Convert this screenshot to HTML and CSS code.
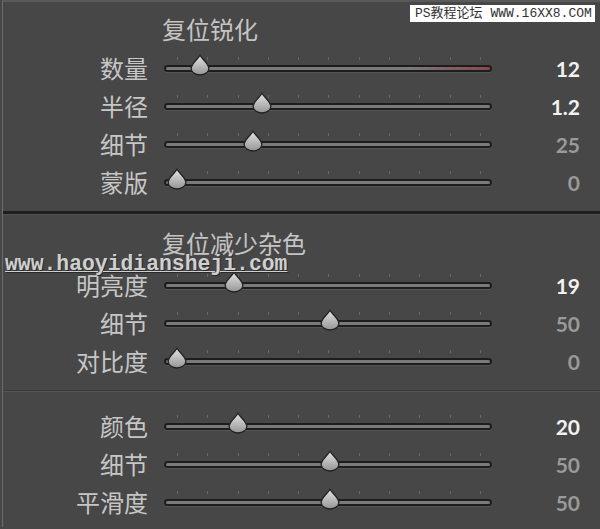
FILE: index.html
```html
<!DOCTYPE html>
<html lang="zh">
<head>
	<meta http-equiv="Content-Type" content="text/html;charset=UTF-8">
	<link rel="stylesheet" href="styles.css">
</head>
<body>

<div class="panel">
	<div class="group">
		<div class="group__title">复位锐化</div>
		<div class="row">
			<span class="row__label">数量</span>
			<div class="slider slider_warn"><span class="slider__thumb" style="left: 36px"></span></div>
			<span class="row__value row__value_on">12</span>
		</div>
		<div class="row">
			<span class="row__label">半径</span>
			<div class="slider"><span class="slider__thumb" style="left: 98px"></span></div>
			<span class="row__value row__value_on">1.2</span>
		</div>
		<div class="row">
			<span class="row__label">细节</span>
			<div class="slider"><span class="slider__thumb" style="left: 89px"></span></div>
			<span class="row__value">25</span>
		</div>
		<div class="row">
			<span class="row__label">蒙版</span>
			<div class="slider"><span class="slider__thumb" style="left: 13px"></span></div>
			<span class="row__value">0</span>
		</div>
	</div>

	<div class="divider"></div>

	<div class="group">
		<div class="group__title group__title_second">复位减少杂色</div>
		<div class="row">
			<span class="row__label">明亮度</span>
			<div class="slider"><span class="slider__thumb" style="left: 70px"></span></div>
			<span class="row__value row__value_on">19</span>
		</div>
		<div class="row">
			<span class="row__label">细节</span>
			<div class="slider"><span class="slider__thumb" style="left: 166px"></span></div>
			<span class="row__value">50</span>
		</div>
		<div class="row">
			<span class="row__label">对比度</span>
			<div class="slider"><span class="slider__thumb" style="left: 13px"></span></div>
			<span class="row__value">0</span>
		</div>
	</div>

	<div class="divider divider_thin"></div>

	<div class="group group_last">
		<div class="row">
			<span class="row__label">颜色</span>
			<div class="slider"><span class="slider__thumb" style="left: 74px"></span></div>
			<span class="row__value row__value_on">20</span>
		</div>
		<div class="row">
			<span class="row__label">细节</span>
			<div class="slider"><span class="slider__thumb" style="left: 166px"></span></div>
			<span class="row__value">50</span>
		</div>
		<div class="row">
			<span class="row__label">平滑度</span>
			<div class="slider"><span class="slider__thumb" style="left: 166px"></span></div>
			<span class="row__value">50</span>
		</div>
	</div>
</div>

<div class="stamp">PS教程论坛 WWW.16XX8.COM</div>
<div class="mark">www.haoyidiansheji.com</div>

</body>
</html>
```

FILE: styles.css
```css
body {
	margin: 0;
	padding: 0;
	background: #474747;
	min-height: 100vh;
	font-family: "Noto Sans CJK SC", "Noto Sans", sans-serif;
	overflow: hidden;
}

.panel {
	margin-left: 2px;
	border-left: 1px solid #6c6c6c;
	border-top: 2px solid #5a5a5a;
	min-height: 527px;
	box-sizing: border-box;
}

.group__title {
	padding: 14px 0 7px 159px;
	font-size: 24px;
	line-height: 26px;
	color: #c4c4c4;
}

.group__title_second {
	padding-top: 15px;
	padding-bottom: 10px;
}

.group_last {
	padding-top: 15px;
}

.row {
	display: grid;
	grid-template-columns: 145px 328px 88px;
	column-gap: 16px;
	align-items: center;
	height: 38px;
}

.row__label {
	text-align: right;
	font-size: 24px;
	line-height: 38px;
	color: #c6c6c6;
}

.row__value {
	text-align: right;
	padding-right: 16px;
	font-family: Lato, "Open Sans", sans-serif;
	font-weight: bold;
	font-size: 21px;
	color: #9a9a9a;
}

.row__value_on {
	color: #f2f2f2;
}

.slider {
	position: relative;
	height: 3px;
	margin-top: 1px;
	border: 2px solid #1d1d1d;
	border-radius: 4px;
	background: #7a7a7a;
	box-shadow: 0 1px 0 #555;
}

.slider_warn {
	background: linear-gradient(to right, #7a7a7a 0, #7a7a7a 75%, #8a4650 100%);
}

/* деления над дорожкой */
.slider::before {
	content: '';
	position: absolute;
	top: -10px;
	left: 11px;
	right: 9px;
	height: 3px;
	background: repeating-linear-gradient(to right, #686868 0, #686868 1px, transparent 1px, transparent 30.3px);
}

/* left считается от края дорожки, поправка на рамку 2px */
.slider__thumb {
	position: absolute;
	top: -13px;
	width: 20px;
	height: 22px;
	margin-left: -12px;
	background: url("data:image/svg+xml;utf8,<svg xmlns='http://www.w3.org/2000/svg' width='20' height='22' viewBox='0 0 20 22'><defs><linearGradient id='g' x1='0' y1='0' x2='0' y2='1'><stop offset='0' stop-color='%23e4e4e4'/><stop offset='1' stop-color='%23959595'/></linearGradient></defs><path d='M10 1.2C12.2 5.4 18.8 9.4 18.8 14.4A8.8 6.6 0 0 1 1.2 14.4C1.2 9.4 7.8 5.4 10 1.2Z' fill='url(%23g)' stroke='%23222' stroke-width='1.3'/></svg>") no-repeat;
}

.divider {
	margin-top: 10px;
	border-top: 3px solid #1f1f1f;
	border-bottom: 1px solid #535353;
}

.divider_thin {
	border-top: 1px solid #3a3a3a;
	border-bottom: 1px solid #555;
}

.stamp {
	position: absolute;
	top: 5px;
	left: 410px;
	width: 185px;
	height: 17px;
	box-sizing: border-box;
	padding-left: 5px;
	background: #fff;
	font-family: "Liberation Mono", "Noto Sans CJK SC", monospace;
	font-size: 13px;
	line-height: 17px;
	color: #333;
	white-space: nowrap;
}

.mark {
	position: absolute;
	top: 254px;
	left: 5px;
	font-family: "Liberation Mono", monospace;
	font-weight: bold;
	font-size: 21.4px;
	line-height: 21px;
	color: #cfcfcf;
	text-decoration: underline;
	text-decoration-thickness: 1px;
	text-shadow: 1px 1px 0 #2a2a2a;
	white-space: nowrap;
}
```
